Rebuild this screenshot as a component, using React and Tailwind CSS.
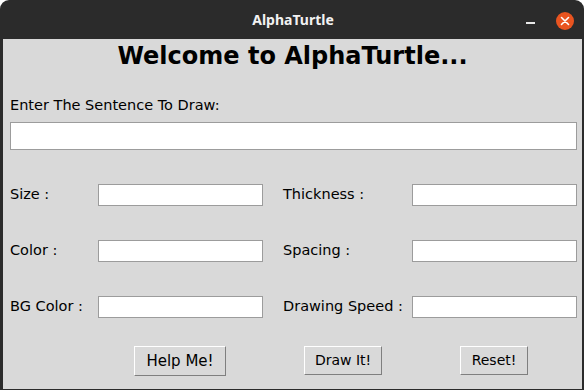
import React from 'react';

const fieldRows = [
    [{ label: 'Size :' }, { label: 'Thickness :' }],
    [{ label: 'Color :' }, { label: 'Spacing :' }],
    [{ label: 'BG Color :' }, { label: 'Drawing Speed :' }],
];

const Entry = ({ className }) => (
    <div className={`h-[22px] bg-white border border-[#9c9c9c] ${className}`}></div>
);

const TkButton = ({ children, className }) => (
    <div className={`flex items-center justify-center bg-[#d9d9d9] border border-t-white border-l-white border-b-[#7f7f7f] border-r-[#7f7f7f] text-black ${className}`}>
        {children}
    </div>
);

const App = () => {
    return (
        <div className="w-[584px] h-[390px] bg-white" style={{ fontFamily: '"DejaVu Sans", sans-serif' }}>
            <div className="w-full h-full flex flex-col bg-[#2b2b2b] rounded-t-[9px] overflow-hidden">
                {/* title bar */}
                <div className="relative h-[39px] flex items-center justify-center shrink-0">
                    <span className="text-[14px] font-bold text-[#f2f2f2] ml-[2px]" style={{ fontFamily: '"Noto Sans", sans-serif' }}>AlphaTurtle</span>
                    <div className="absolute right-[10px] top-[12px] flex items-center gap-[21px]">
                        <div className="w-[9px] h-[2px] bg-[#e8e8e8] mt-[4px]"></div>
                        <div className="w-[18px] h-[18px] rounded-full bg-[#e95420] flex items-center justify-center">
                            <svg width="10" height="10" viewBox="0 0 10 10">
                                <path d="M1.5 1.5 L8.5 8.5 M8.5 1.5 L1.5 8.5" stroke="white" strokeWidth="1.6" strokeLinecap="round" />
                            </svg>
                        </div>
                    </div>
                </div>

                {/* body */}
                <div className="flex-1 ml-[3px] mr-[2px] mb-[1px] bg-[#d9d9d9] flex flex-col pl-[7px] pr-[5px] text-black">
                    <h1 className="text-[24px] leading-[28px] font-bold text-center mt-[3px] -ml-[2px]">Welcome to AlphaTurtle...</h1>

                    <div className="text-[14.5px] leading-[16px] mt-[27px]">Enter The Sentence To Draw:</div>
                    <div className="h-[28px] mt-[9px] bg-white border border-[#9c9c9c]"></div>

                    <div className="flex flex-col gap-[34px] mt-[34px]">
                        {fieldRows.map((row, i) => (
                            <div key={i} className="flex items-center h-[22px] text-[14.5px]">
                                <div className="w-[88px]">{row[0].label}</div>
                                <Entry className="w-[165px]" />
                                <div className="w-[149px] pl-[20px]">{row[1].label}</div>
                                <Entry className="w-[165px]" />
                            </div>
                        ))}
                    </div>

                    <div className="flex items-start mt-[28px]">
                        <TkButton className="ml-[124px] w-[92px] h-[30px] text-[15px]">Help Me!</TkButton>
                        <TkButton className="ml-[78px] w-[78px] h-[29px] text-[14px]">Draw It!</TkButton>
                        <TkButton className="ml-[78px] w-[68px] h-[29px] text-[14px]">Reset!</TkButton>
                    </div>
                </div>
            </div>
        </div>
    );
};

export default App;
